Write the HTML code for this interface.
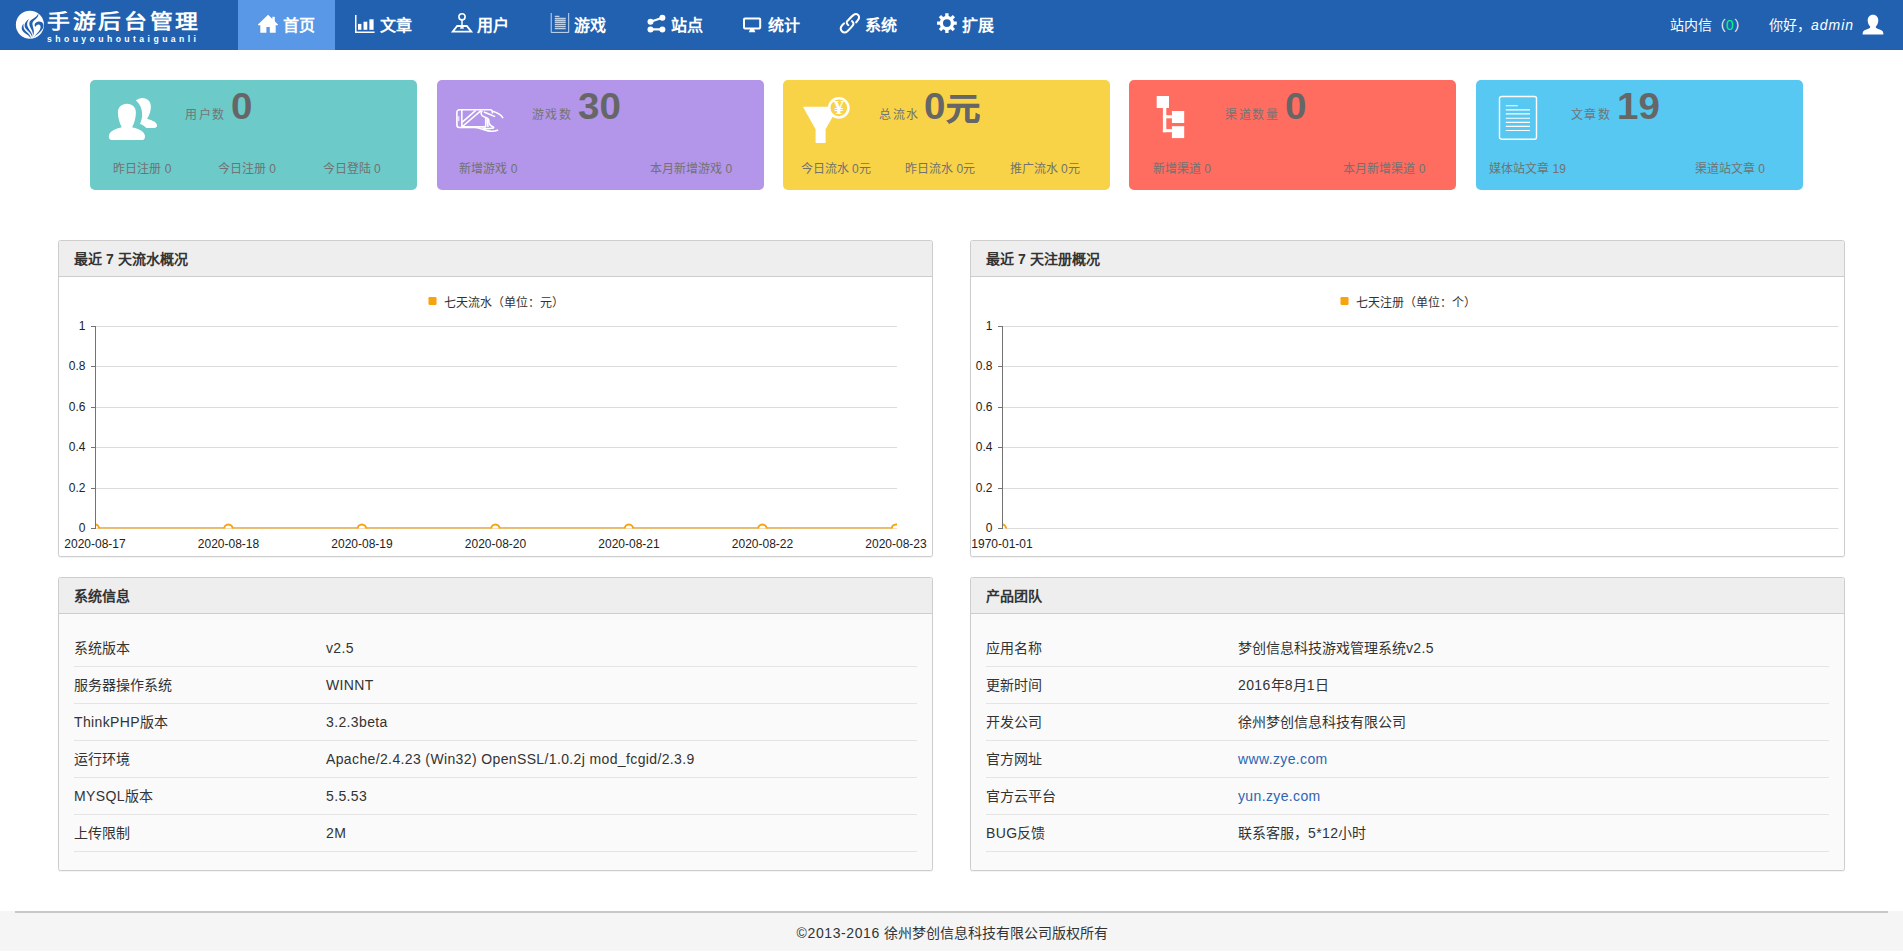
<!DOCTYPE html>
<html lang="zh-CN">
<head>
<meta charset="utf-8">
<title>手游后台管理</title>
<style>
*{box-sizing:border-box}
html,body{margin:0;padding:0}
body{width:1903px;height:952px;position:relative;overflow:hidden;background:#fff;font-family:"Liberation Sans",sans-serif;color:#333;font-size:14px}
.abs{position:absolute}
i{font-style:normal}
/* NAV */
#nav{position:absolute;left:0;top:0;width:1903px;height:50px;background:#2161b0}
#logo{position:absolute;left:0;top:0;width:238px;height:50px}
#logo .t1{position:absolute;left:47px;top:8.5px;width:170px;height:26px;line-height:26px;font-size:20px;font-weight:bold;color:#fff;letter-spacing:2.5px;white-space:nowrap;transform:scaleX(1.14);transform-origin:0 0}
#logo .t2{position:absolute;left:47px;top:32.5px;width:170px;height:12px;line-height:12px;font-size:8.6px;font-weight:bold;color:#fff;letter-spacing:3.45px;white-space:nowrap}
.tab{position:absolute;top:0;width:97px;height:50px;color:#fff}
.tab.on{background:#5898e6}
.tab svg{position:absolute;left:20px;top:14px;width:20px;height:20px}
.tab span{position:absolute;left:45px;top:14.7px;width:40px;height:22px;line-height:22px;font-size:16px;font-weight:bold;white-space:nowrap;font-family:"Liberation Serif",serif}
.nr{position:absolute;top:15px;height:20px;line-height:20px;font-size:14px;color:#fff;white-space:nowrap}
.nr i.g{color:#00ff7f}
.nr i{font-style:normal}
.nr i:not(.g){font-style:italic;letter-spacing:1px}
/* CARDS */
.card{position:absolute;top:80px;width:327px;height:110px;border-radius:5px}
.card .lb{position:absolute;top:27px;height:16px;line-height:16px;font-size:12px;letter-spacing:1.5px;white-space:nowrap;color:#747474}
.card .nm{position:absolute;top:5.5px;height:42px;line-height:42px;font-size:36px;font-weight:bold;white-space:nowrap;color:#666;transform:scaleX(1.07);transform-origin:0 0}
.card .nm .yu{font-size:32px;position:relative;top:1px;margin-left:.5px;-webkit-text-stroke:.5px #666}
.card .bt{position:absolute;top:81px;width:120px;height:16px;line-height:16px;font-size:12px;text-align:center;white-space:nowrap;color:#727272}
/* PANELS */
.panel{position:absolute;width:875px;border:1px solid #cdcdcd;border-radius:2.5px;background:#fff;box-shadow:0 1px 1px rgba(0,0,0,.05)}
.panel.tb{background:#fafafa}
.panel .hd{position:absolute;left:0;top:0;width:873px;height:36px;background:#eee;border-bottom:1px solid #cdcdcd;border-radius:2px 2px 0 0}
.panel .hd b{position:absolute;left:15px;top:8px;height:20px;line-height:20px;font-size:14px;font-weight:bold;color:#333;white-space:nowrap}
.yl{position:absolute;width:40px;height:16px;line-height:16px;font-size:12px;text-align:right;color:#222;white-space:nowrap}
.xl{position:absolute;width:100px;height:16px;line-height:16px;font-size:12px;text-align:center;color:#222;white-space:nowrap}
.lg{position:absolute;height:16px;line-height:16px;font-size:12px;color:#333;white-space:nowrap}
.row{position:absolute;left:15px;width:843px;height:37px;border-bottom:1px solid #e4e4e4;line-height:36px;font-size:14px;color:#333;white-space:nowrap}
.row .k{position:absolute;left:0;top:0}
.row .v{position:absolute;left:252px;top:0}
.row a{color:#2d64b3}
.l{letter-spacing:.37px}
.l2{letter-spacing:.6px}
/* FOOTER */
#ft{position:absolute;left:0;top:911px;width:1903px;height:40px;background:#f5f5f5}
#ft .ln{position:absolute;left:15px;top:0;width:1873px;height:2px;background:#c8c8c8}
#ft .tx{position:absolute;left:0;top:12px;width:1903px;padding-left:2px;height:20px;line-height:20px;text-align:center;font-size:14px;color:#333;white-space:nowrap}
</style>
</head>
<body>
<div id="nav">
<div id="logo">
<svg class="abs" style="left:14px;top:9px;width:32px;height:32px" viewBox="0 0 32 32">
<circle cx="15.9" cy="15.8" r="14.05" fill="#fff"/>
<g fill="#2161b0">
<path d="M24.2 4.6 C23 9 15.5 10 15.3 14.5 C15.2 19 19.5 21 18.9 27 C21.5 22.5 18.3 18 18.4 14.6 C18.6 11 25.5 9.5 24.2 4.6 Z"/>
<path d="M15.2 10 C12.5 11.5 10.4 14 10.6 16.8 C11 21.5 17.5 23 18.2 28.6 C19.4 24.5 14.5 20.5 13.4 17 C12.6 14.5 13.6 12 15.2 10 Z"/>
<path d="M9.6 14.6 C8 16.5 7.3 18.8 8 20.8 C9.5 24.8 15.6 25.6 16.8 29.8 C17.4 26.5 13 23.5 10.8 21 C9.4 19.2 9.2 16.8 9.6 14.6 Z"/>
<path d="M19.2 28.8 C23 25.5 27.5 22.5 29 19 C30.5 15.5 28.5 12.6 25.2 12.6 C22.8 12.6 20.8 14 20.6 16 C20.5 17 21 17.6 21.6 17.8 C22 16.4 23.4 15.2 25 15.6 C26.8 16 27 18.4 26 20.4 C24.6 23.2 21.5 25.8 19.2 28.8 Z"/>
</g>
</svg>
<div class="t1">手游后台管理</div>
<div class="t2">shouyouhoutaiguanli</div>
</div>
<div class="tab on" style="left:238px"><svg viewBox="0 0 20 20" overflow="visible"><path fill="#fff" d="M10.1 .7 L20 10.6 L20 11.2 L17.7 11.2 L17.7 18.75 L11.8 18.75 L11.8 13 L8.4 13 L8.4 18.75 L2.3 18.75 L2.3 11.2 L0 11.2 L0 10.6 Z"/><rect x="14.3" y="2.8" width="2.5" height="5" fill="#fff"/></svg><span>首页</span></div>
<div class="tab" style="left:335px"><svg viewBox="0 0 20 20" overflow="visible"><path fill="none" stroke="#fff" stroke-width="1.5" d="M.75 1.1 V18.25 H19.6"/><rect x="3" y="9.9" width="3.4" height="5.9" fill="#fff"/><rect x="8.5" y="7.7" width="3.8" height="8.1" fill="#fff"/><rect x="14.4" y="5.3" width="4.2" height="10.5" fill="#fff"/></svg><span>文章</span></div>
<div class="tab" style="left:432px"><svg viewBox="0 0 20 20" overflow="visible"><circle cx="10" cy="2.8" r="3.1" fill="none" stroke="#fff" stroke-width="1.6"/><path fill="none" stroke="#fff" stroke-width="1.5" d="M10 6 V14.1 M8.2 14.1 H11.8"/><path fill="none" stroke="#fff" stroke-width="1.8" stroke-linejoin="miter" d="M5.2 12 H14.8 L19.3 17.7 H.7 Z"/></svg><span>用户</span></div>
<div class="tab" style="left:529px"><svg viewBox="0 0 20 20" overflow="visible"><path fill="none" stroke="#fff" stroke-opacity=".85" stroke-width=".9" d="M2.2 -1 V18.4 H19.7 V-1"/><g stroke="#fff" stroke-opacity=".72" stroke-width="1.3"><path d="M5.8 2.4 H10.4 M5.8 4.5 H16.7 M5.8 6.5 H16.7 M5.8 8.5 H16.7 M5.8 10.6 H16.7 M5.8 12.6 H16.7 M5.8 14.6 H16.7"/></g></svg><span>游戏</span></div>
<div class="tab" style="left:626px"><svg viewBox="0 0 20 20" overflow="visible"><g fill="#fff"><circle cx="4.5" cy="7.8" r="3"/><circle cx="16.4" cy="3.8" r="3"/><circle cx="4.5" cy="15.4" r="3"/><circle cx="16.4" cy="15.4" r="3"/></g><path stroke="#fff" stroke-width="2.2" d="M4.5 7.8 L16.4 3.8 M4.5 15.4 H16.4"/></svg><span>站点</span></div>
<div class="tab" style="left:723px"><svg viewBox="0 0 20 20" overflow="visible"><rect x="1" y="4.6" width="16.2" height="9.8" rx=".8" fill="none" stroke="#fff" stroke-width="2"/><path fill="#fff" d="M7.2 15 H11 L12.4 18.3 H5.8 Z"/></svg><span>统计</span></div>
<div class="tab" style="left:820px"><svg viewBox="0 0 20 20" overflow="visible"><g fill="none" stroke="#fff" stroke-width="2.05" stroke-linecap="round" stroke-linejoin="round"><path d="M8.35 11.15 C8.17 10.97 7.57 10.62 7.30 10.10 C7.03 9.58 6.58 8.73 6.75 8.05 C6.92 7.37 7.20 7.19 8.35 6.00 C9.50 4.81 12.34 1.90 13.65 0.90 C14.96 -0.10 15.40 -0.08 16.20 0.00 C17.00 0.08 17.97 0.80 18.45 1.40 C18.93 2.00 19.10 2.87 19.05 3.60 C19.00 4.33 18.63 5.01 18.15 5.80 C17.67 6.59 16.48 7.92 16.15 8.35"/><path d="M12.00 7.00 C12.20 7.28 12.97 8.08 13.20 8.65 C13.42 9.22 13.55 9.77 13.35 10.40 C13.15 11.03 12.98 11.32 12.00 12.45 C11.02 13.58 8.65 16.19 7.45 17.20 C6.25 18.21 5.72 18.50 4.80 18.50 C3.87 18.50 2.58 17.91 1.90 17.20 C1.22 16.49 0.70 15.18 0.70 14.25 C0.70 13.32 1.33 12.41 1.90 11.60 C2.47 10.79 3.73 9.77 4.10 9.40"/></g></svg><span>系统</span></div>
<div class="tab" style="left:917px"><svg viewBox="0 0 20 20" overflow="visible"><path fill="#fff" fill-rule="evenodd" d="M8.26 -0.76 L11.54 -0.76 L11.60 2.00 L13.71 2.88 L15.71 0.96 L18.04 3.29 L16.12 5.29 L17.00 7.40 L19.76 7.46 L19.76 10.74 L17.00 10.80 L16.12 12.91 L18.04 14.91 L15.71 17.24 L13.71 15.32 L11.60 16.20 L11.54 18.96 L8.26 18.96 L8.20 16.20 L6.09 15.32 L4.09 17.24 L1.76 14.91 L3.68 12.91 L2.80 10.80 L0.04 10.74 L0.04 7.46 L2.80 7.40 L3.68 5.29 L1.76 3.29 L4.09 0.96 L6.09 2.88 L8.20 2.00 Z M6.00 9.10 a3.90 3.90 0 1 0 7.80 0 a3.90 3.90 0 1 0 -7.80 0 Z"/></svg><span>扩展</span></div>
<div class="nr" style="left:1670px">站内信（<i class="g">0</i>）</div>
<div class="nr" style="left:1769px">你好，<i>admin</i></div>
<svg class="abs" style="left:1862px;top:14px;width:22px;height:22px" viewBox="0 0 22 22"><path fill="#fff" d="M11 .8c3.4 0 5.3 2.5 5.3 5.6 0 2.1-.8 4.3-2.1 5.6-.5.500-.6 1.6 0 2 1.5 1 5.4 1.7 6.5 3.300.6.900.7 2 .7 3.3H.6c0-1.300.1-2.400.7-3.3 1.1-1.6 5-2.3 6.5-3.300.6-.4.500-1.5 0-2C6.5 10.7 5.7 8.5 5.7 6.4 5.7 3.3 7.600.8 11 .8z"/></svg>
</div>
<div class="card" style="left:90px;background:#6ccac9">
<svg class="abs" style="left:18px;top:17px;width:50px;height:44px" viewBox="0 0 50 44">
<path fill="#fff" d="M27.9 3.5 C29.5 1.9 32 .9 34.4 .9 C39.5 .9 43 4.8 42.9 9.7 C42.8 14.5 41 18.5 39.1 22.1 C43 23 47.5 24.5 48.8 27.3 C49.6 29.2 48.5 30.9 46.7 30.9 H38.5 C36.5 29.3 34.2 27.9 32 26.8 C33.6 23.5 34.3 20 34.1 16.5 C33.9 11 31.5 6.5 27.9 3.5 Z"/>
<path fill="#fff" d="M19 6.8 C24.5 6.8 28 10.5 27.9 15.5 C27.8 21 26.5 26 24.1 30.3 C29 31.5 35 33.5 36.6 37.5 C37.6 40.2 36.6 42.9 34.6 42.9 H3.4 C1.4 42.9 .2 40.2 1.2 37.5 C2.8 33.5 8.8 31.5 13.8 30.3 C11.4 26 10 21 9.9 15.5 C9.8 10.5 13.5 6.8 19 6.8 Z"/>
</svg>
<div class="lb" style="left:95.0px">用户数</div>
<div class="nm" style="left:140.7px">0</div>
<div class="bt" style="left:-7.5px">昨日注册 0</div>
<div class="bt" style="left:97.0px">今日注册 0</div>
<div class="bt" style="left:201.7px">今日登陆 0</div>
</div>
<div class="card" style="left:437px;background:#b396e9">
<svg class="abs" style="left:18px;top:28px;width:50px;height:26px" viewBox="0 0 50 26" fill="none" stroke="#fff" stroke-width="1.6" stroke-linecap="round" stroke-linejoin="round">
<path d="M37.4 4.8 C37.6 3.4 37 2.2 36 1.8 H4.4 a2.5 2.5 0 0 0 -2.5 2.5 V17 a2.5 2.5 0 0 0 2.5 2.5 H20 C24 19.8 28 21.5 32 22.6 C36 23.6 39.5 23.4 42.5 22.2"/>
<path d="M6.8 2 V19.3 M7.6 13.8 L20.2 2.9 M8 18 L25.7 2.9 M8 18.9 H30.7 V10.5"/>
<path d="M3.6 8.8 V12.6" stroke-opacity=".7"/>
<path d="M27 3.3 C25.8 4.5 25.8 6.5 27.5 7.8 C29.5 9.2 32 9.8 33.2 10.8 C34.4 11.8 33.6 13.4 34 15 C34.5 17 36.5 18.4 38.7 19.3"/>
<path d="M29.5 4.2 C33 5.5 36.5 7 39.5 8.4"/>
<path d="M37.4 3.3 C41 4.2 45.5 6 47.7 9.6"/>
<path d="M28.6 20.6 C32 20.8 35.5 20.6 38.3 20"/>
<path d="M32.2 11 C32 13 32.4 16 33 18.5"/>
</svg>
<div class="lb" style="left:94.5px">游戏数</div>
<div class="nm" style="left:141.2px">30</div>
<div class="bt" style="left:-8.5px">新增游戏 0</div>
<div class="bt" style="left:194.3px">本月新增游戏 0</div>
</div>
<div class="card" style="left:783px;background:#f8d347">
<svg class="abs" style="left:18px;top:16px;width:52px;height:50px" viewBox="0 0 52 50">
<path fill="#fff" d="M1.9 10.7 H37.3 L24.6 33.3 V46.9 H14.6 V33.3 Z"/>
<circle cx="37.8" cy="11.9" r="9.6" fill="#f8d347" stroke="#fff" stroke-width="2.6"/>
<text x="37.8" y="18.2" text-anchor="middle" font-family="Liberation Serif, serif" font-weight="bold" font-size="18.5" fill="#fff" transform="translate(37.8 0) scale(1.15 1) translate(-37.8 0)">¥</text>
</svg>
<div class="lb" style="left:96.0px">总流水</div>
<div class="nm" style="left:141.2px">0<span class="yu">元</span></div>
<div class="bt" style="left:-7.4px">今日流水 0元</div>
<div class="bt" style="left:97.2px">昨日流水 0元</div>
<div class="bt" style="left:201.7px">推广流水 0元</div>
</div>
<div class="card" style="left:1129px;background:#ff6c60">
<svg class="abs" style="left:27px;top:16px;width:30px;height:43px" viewBox="0 0 30 43">
<g fill="#fff"><rect x=".7" y="0" width="12.3" height="12"/><rect x="15.9" y="15" width="12.3" height="12"/><rect x="15.9" y="30.2" width="12.3" height="11.9"/>
<rect x="6.9" y="12" width="3.4" height="24.2"/><rect x="6.9" y="19.2" width="9" height="3.1"/><rect x="6.9" y="33.1" width="9" height="3.1"/></g>
</svg>
<div class="lb" style="left:96.0px">渠道数量</div>
<div class="nm" style="left:155.7px">0</div>
<div class="bt" style="left:-7.2px">新增渠道 0</div>
<div class="bt" style="left:195.4px">本月新增渠道 0</div>
</div>
<div class="card" style="left:1476px;background:#57c8f2">
<svg class="abs" style="left:22px;top:15px;width:40px;height:46px" viewBox="0 0 40 46" fill="none" stroke="#fff">
<rect x="1.5" y="1.5" width="37" height="42.7" rx="2" stroke-width="1.4"/>
<path stroke-width="1.15" d="M7.8 10.7 H19.8 M7.8 14.8 H32 M7.8 18.9 H32 M7.8 23.2 H32 M7.8 27.3 H32 M7.8 31.4 H32 M7.8 35.5 H32"/>
</svg>
<div class="lb" style="left:94.5px">文章数</div>
<div class="nm" style="left:141.2px">19</div>
<div class="bt" style="left:-8.5px">媒体站文章 19</div>
<div class="bt" style="left:194.0px">渠道站文章 0</div>
</div>
<div class="panel" style="left:58px;top:240px;height:317px">
<div class="hd"><b>最近 7 天流水概况</b></div>
<svg class="abs" style="left:0;top:0;width:873px;height:315px" viewBox="59 241 873 315">
<path d="M95.5 326.5 H897.0" stroke="#dcdcdc" stroke-width="1"/>
<path d="M95.5 366.5 H897.0" stroke="#dcdcdc" stroke-width="1"/>
<path d="M95.5 407.5 H897.0" stroke="#dcdcdc" stroke-width="1"/>
<path d="M95.5 447.5 H897.0" stroke="#dcdcdc" stroke-width="1"/>
<path d="M95.5 488.5 H897.0" stroke="#dcdcdc" stroke-width="1"/>
<path d="M95.5 528.5 H897.0" stroke="#dcdcdc" stroke-width="1"/>
<path d="M95.5 326.0 V528.9" stroke="#737373" stroke-width="1"/>
<path d="M91.0 326.5 H96.0" stroke="#737373" stroke-width="1"/>
<path d="M91.0 366.5 H96.0" stroke="#737373" stroke-width="1"/>
<path d="M91.0 407.5 H96.0" stroke="#737373" stroke-width="1"/>
<path d="M91.0 447.5 H96.0" stroke="#737373" stroke-width="1"/>
<path d="M91.0 488.5 H96.0" stroke="#737373" stroke-width="1"/>
<path d="M91.0 528.5 H96.0" stroke="#737373" stroke-width="1"/>
<clipPath id="cp58"><rect x="96.0" y="300" width="801.0" height="228.4"/></clipPath>
<g clip-path="url(#cp58)">
<path d="M95.5 528.4 H897.0" stroke="#f7a20f" stroke-width="2.4"/>
<circle cx="94.9" cy="528.6" r="4.2" fill="#fff" stroke="#f7a20f" stroke-width="2"/>
<circle cx="228.4" cy="528.6" r="4.2" fill="#fff" stroke="#f7a20f" stroke-width="2"/>
<circle cx="361.9" cy="528.6" r="4.2" fill="#fff" stroke="#f7a20f" stroke-width="2"/>
<circle cx="495.4" cy="528.6" r="4.2" fill="#fff" stroke="#f7a20f" stroke-width="2"/>
<circle cx="628.9" cy="528.6" r="4.2" fill="#fff" stroke="#f7a20f" stroke-width="2"/>
<circle cx="762.4" cy="528.6" r="4.2" fill="#fff" stroke="#f7a20f" stroke-width="2"/>
<circle cx="895.9" cy="528.6" r="4.2" fill="#fff" stroke="#f7a20f" stroke-width="2"/>
</g>
<rect x="428.5" y="297" width="8" height="8" rx="1.2" fill="#f7a20f"/>
</svg>
<div class="yl" style="left:-13.5px;top:77.0px">1</div>
<div class="yl" style="left:-13.5px;top:117.4px">0.8</div>
<div class="yl" style="left:-13.5px;top:157.8px">0.6</div>
<div class="yl" style="left:-13.5px;top:198.1px">0.4</div>
<div class="yl" style="left:-13.5px;top:238.5px">0.2</div>
<div class="yl" style="left:-13.5px;top:278.9px">0</div>
<div class="xl" style="left:-14.0px;top:295.0px">2020-08-17</div>
<div class="xl" style="left:119.5px;top:295.0px">2020-08-18</div>
<div class="xl" style="left:253.0px;top:295.0px">2020-08-19</div>
<div class="xl" style="left:386.5px;top:295.0px">2020-08-20</div>
<div class="xl" style="left:520.0px;top:295.0px">2020-08-21</div>
<div class="xl" style="left:653.5px;top:295.0px">2020-08-22</div>
<div class="xl" style="left:787.0px;top:295.0px">2020-08-23</div>
<div class="lg" style="left:384.5px;top:54.0px">七天流水（单位：元）</div>
</div>
<div class="panel" style="left:970px;top:240px;height:317px">
<div class="hd"><b>最近 7 天注册概况</b></div>
<svg class="abs" style="left:0;top:0;width:873px;height:315px" viewBox="971 241 873 315">
<path d="M1002.5 326.5 H1838.5" stroke="#dcdcdc" stroke-width="1"/>
<path d="M1002.5 366.5 H1838.5" stroke="#dcdcdc" stroke-width="1"/>
<path d="M1002.5 407.5 H1838.5" stroke="#dcdcdc" stroke-width="1"/>
<path d="M1002.5 447.5 H1838.5" stroke="#dcdcdc" stroke-width="1"/>
<path d="M1002.5 488.5 H1838.5" stroke="#dcdcdc" stroke-width="1"/>
<path d="M1002.5 528.5 H1838.5" stroke="#dcdcdc" stroke-width="1"/>
<path d="M1002.5 326.0 V528.9" stroke="#737373" stroke-width="1"/>
<path d="M998.0 326.5 H1003.0" stroke="#737373" stroke-width="1"/>
<path d="M998.0 366.5 H1003.0" stroke="#737373" stroke-width="1"/>
<path d="M998.0 407.5 H1003.0" stroke="#737373" stroke-width="1"/>
<path d="M998.0 447.5 H1003.0" stroke="#737373" stroke-width="1"/>
<path d="M998.0 488.5 H1003.0" stroke="#737373" stroke-width="1"/>
<path d="M998.0 528.5 H1003.0" stroke="#737373" stroke-width="1"/>
<clipPath id="cp970"><rect x="1003.0" y="300" width="835.5" height="228.4"/></clipPath>
<g clip-path="url(#cp970)">
<circle cx="1001.9" cy="528.6" r="4.2" fill="#fff" stroke="#f7a20f" stroke-width="2"/>
</g>
<rect x="1340.5" y="297" width="8" height="8" rx="1.2" fill="#f7a20f"/>
</svg>
<div class="yl" style="left:-18.5px;top:77.0px">1</div>
<div class="yl" style="left:-18.5px;top:117.4px">0.8</div>
<div class="yl" style="left:-18.5px;top:157.8px">0.6</div>
<div class="yl" style="left:-18.5px;top:198.1px">0.4</div>
<div class="yl" style="left:-18.5px;top:238.5px">0.2</div>
<div class="yl" style="left:-18.5px;top:278.9px">0</div>
<div class="xl" style="left:-19.0px;top:295.0px">1970-01-01</div>
<div class="lg" style="left:384.5px;top:54.0px">七天注册（单位：个）</div>
</div>
<div class="panel tb" style="left:58px;top:577px;height:294px">
<div class="hd"><b>系统信息</b></div>
<div class="row" style="top:52px"><span class="k">系统版本</span><span class="v"><i class="l">v2.5</i></span></div>
<div class="row" style="top:89px"><span class="k">服务器操作系统</span><span class="v"><i class="l">WINNT</i></span></div>
<div class="row" style="top:126px"><span class="k"><i class="l">ThinkPHP</i>版本</span><span class="v"><i class="l">3.2.3beta</i></span></div>
<div class="row" style="top:163px"><span class="k">运行环境</span><span class="v"><i class="l">Apache/2.4.23 (Win32) OpenSSL/1.0.2j mod_fcgid/2.3.9</i></span></div>
<div class="row" style="top:200px"><span class="k"><i class="l">MYSQL</i>版本</span><span class="v"><i class="l">5.5.53</i></span></div>
<div class="row" style="top:237px"><span class="k">上传限制</span><span class="v"><i class="l">2M</i></span></div>
</div>
<div class="panel tb" style="left:970px;top:577px;height:294px">
<div class="hd"><b>产品团队</b></div>
<div class="row" style="top:52px"><span class="k">应用名称</span><span class="v">梦创信息科技游戏管理系统<i class="l">v2.5</i></span></div>
<div class="row" style="top:89px"><span class="k">更新时间</span><span class="v"><i class="l">2016</i>年<i class="l">8</i>月<i class="l">1</i>日</span></div>
<div class="row" style="top:126px"><span class="k">开发公司</span><span class="v">徐州梦创信息科技有限公司</span></div>
<div class="row" style="top:163px"><span class="k">官方网址</span><span class="v"><a class="l">www.zye.com</a></span></div>
<div class="row" style="top:200px"><span class="k">官方云平台</span><span class="v"><a class="l">yun.zye.com</a></span></div>
<div class="row" style="top:237px"><span class="k"><i class="l">BUG</i>反馈</span><span class="v">联系客服，<i class="l">5*12</i>小时</span></div>
</div>
<div id="ft"><div class="ln"></div><div class="tx"><i class="l2">©2013-2016 </i>徐州梦创信息科技有限公司版权所有</div></div>
</body>
</html>
